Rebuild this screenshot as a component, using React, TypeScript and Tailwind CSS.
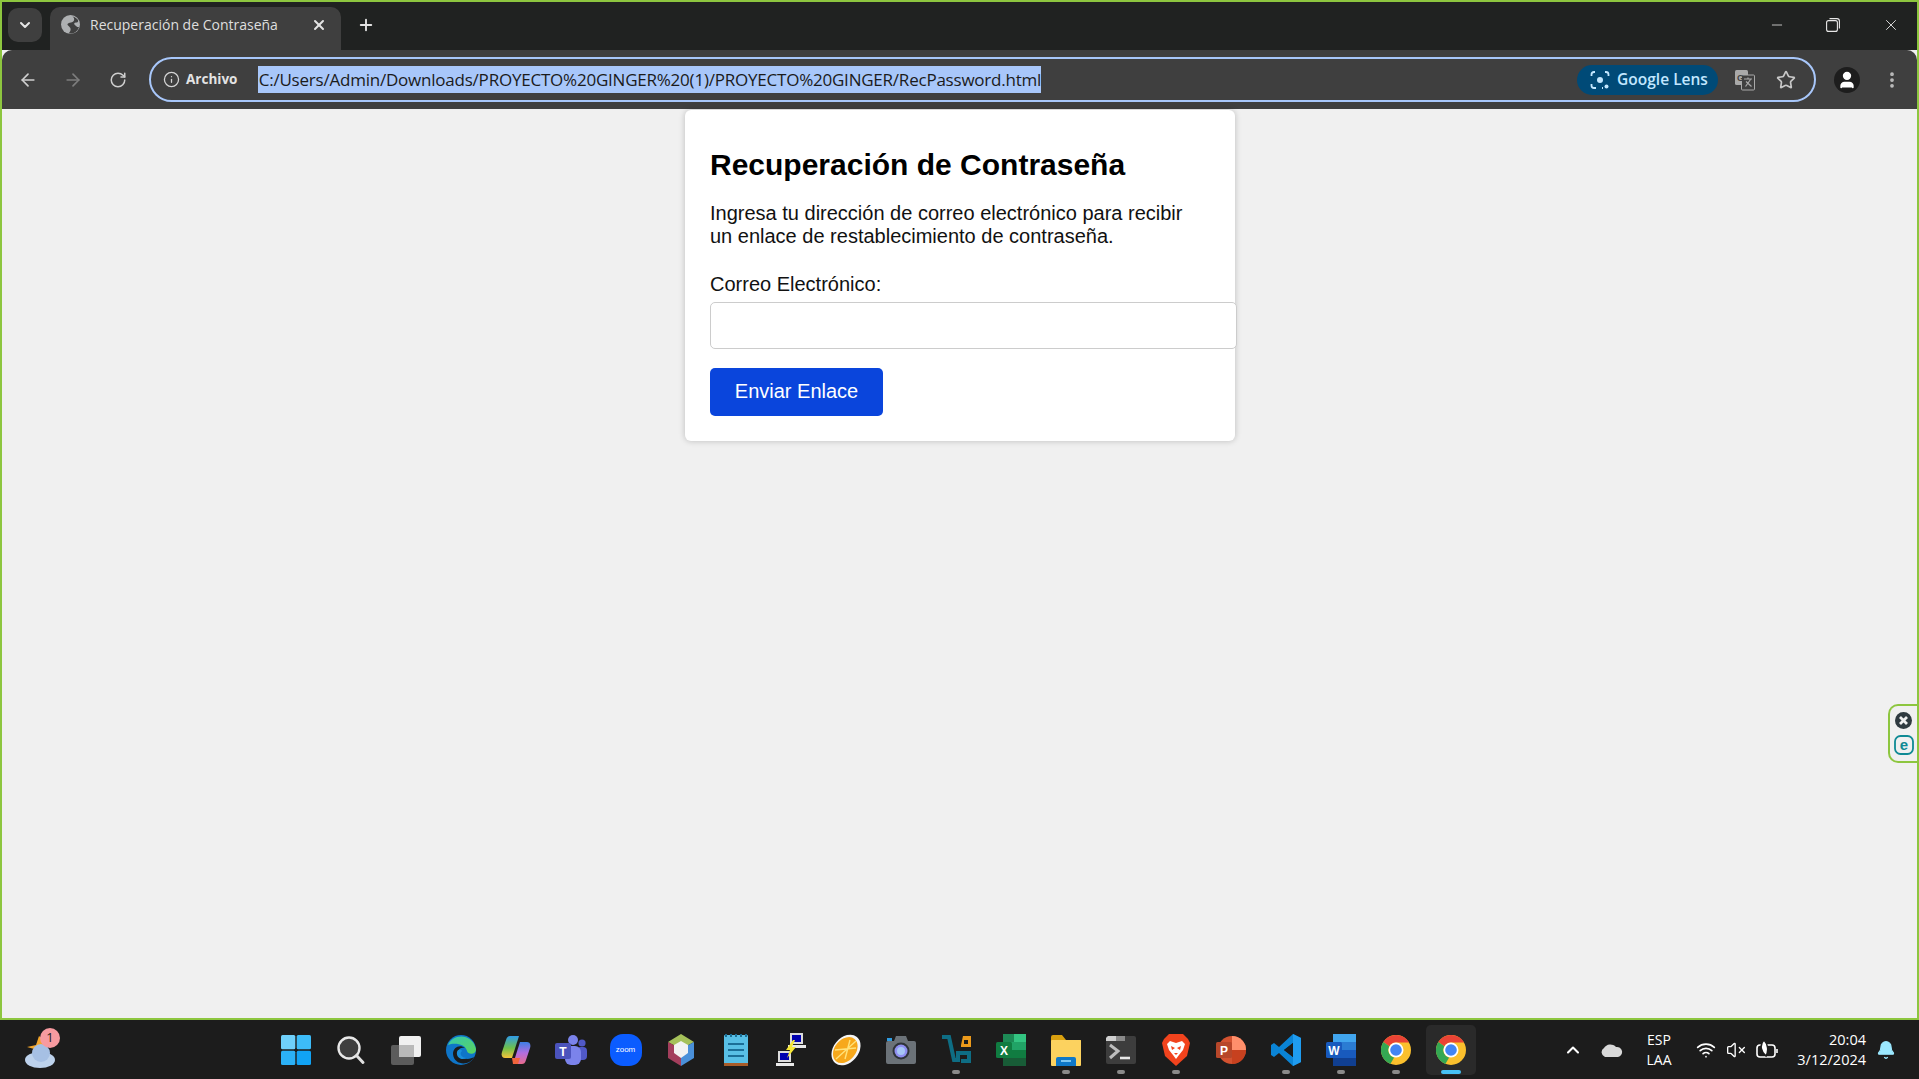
import React from 'react';
import { ArrowLeft, ArrowRight, RotateCw, Info, X, Plus, ChevronDown, ChevronUp, Star, EllipsisVertical, Minus, User, VolumeX, Wifi, Bell } from 'lucide-react';

const WindowsLogo = () => (
  <svg width="30" height="30" viewBox="0 0 30 30">
    <rect x="0" y="0" width="14.3" height="14.3" rx="1.5" fill="#6fd0fb" />
    <rect x="15.7" y="0" width="14.3" height="14.3" rx="1.5" fill="#3dbcf8" />
    <rect x="0" y="15.7" width="14.3" height="14.3" rx="1.5" fill="#2bb1f7" />
    <rect x="15.7" y="15.7" width="14.3" height="14.3" rx="1.5" fill="#11a3f5" />
  </svg>
);

const SearchIcon = () => (
  <svg width="30" height="30" viewBox="0 0 30 30" fill="none">
    <circle cx="13" cy="13" r="10.5" fill="#3e3e3e" stroke="#e8e8e8" strokeWidth="2.4" />
    <path d="M20.5 20.5 L27 27.5" stroke="#e0e0e0" strokeWidth="3" strokeLinecap="round" />
  </svg>
);

const TaskView = () => (
  <svg width="30" height="30" viewBox="0 0 30 30">
    <rect x="0" y="10" width="23" height="20" rx="2" fill="#5c5c5c" />
    <rect x="8" y="1" width="22" height="21" rx="2" fill="#f0f0f0" />
    <rect x="8" y="10" width="15" height="12" fill="#b9b9b9" />
  </svg>
);

const EdgeIcon = () => (
  <svg width="30" height="32" viewBox="0 0 30 32">
    <defs>
      <linearGradient id="edgeA" x1="0" y1="0" x2="1" y2="1">
        <stop offset="0" stopColor="#36c7b0" />
        <stop offset="1" stopColor="#5bd35c" />
      </linearGradient>
    </defs>
    <circle cx="15" cy="16" r="15" fill="#0f75c8" />
    <path d="M2 11 C6 0 26 -2 30 15 C30 21 22 21 21 17 C20 10 8 8 2 11 Z" fill="url(#edgeA)" />
    <path d="M19 14 C12 12 10 20 15 23 C20 26 25 25 28 23 C24 32 8 32 7 20 C7 13 14 10 19 14 Z" fill="#1b1b1b" />
    <path d="M16 17 C13 19 15 24 21 24 C15 27 10 23 11 18 C12 15 15 15 16 17 Z" fill="#1a8fdc" />
  </svg>
);

const CopilotIcon = () => (
  <svg width="30" height="32" viewBox="0 0 30 32">
    <defs>
      <linearGradient id="copA" x1="0" y1="0" x2="0" y2="1">
        <stop offset="0" stopColor="#2f9be8" />
        <stop offset="0.55" stopColor="#6fc04a" />
        <stop offset="1" stopColor="#f6c23a" />
      </linearGradient>
      <linearGradient id="copB" x1="0" y1="0" x2="0" y2="1">
        <stop offset="0" stopColor="#3c7fe6" />
        <stop offset="0.5" stopColor="#b26de0" />
        <stop offset="1" stopColor="#e86a8c" />
      </linearGradient>
    </defs>
    <path d="M9 2 H18 L11 24 H4 C1 24 0 21 1 18 L5 6 C6 3 7 2 9 2 Z" fill="url(#copA)" />
    <path d="M21 30 H12 L19 8 H26 C29 8 30 11 29 14 L25 26 C24 29 23 30 21 30 Z" fill="url(#copB)" />
    <path d="M11 24 H19 L17 30 H12 Z" fill="#f0643c" />
  </svg>
);

const TeamsIcon = () => (
  <svg width="32" height="32" viewBox="0 0 32 32">
    <circle cx="18" cy="6" r="5" fill="#7b83eb" />
    <circle cx="27" cy="9" r="3.6" fill="#5059c9" />
    <rect x="22" y="13" width="10" height="13" rx="4" fill="#5059c9" />
    <rect x="10" y="12" width="16" height="19" rx="6" fill="#7b83eb" />
    <rect x="0" y="9" width="16" height="16" rx="2" fill="#4b53bc" />
    <text x="8" y="21.5" textAnchor="middle" fill="#fff" fontSize="12" fontWeight="700" fontFamily="Liberation Sans, sans-serif">T</text>
  </svg>
);

const ZoomIcon = () => (
  <div className="flex h-[32px] w-[32px] items-center justify-center rounded-[13px] bg-[#0b5cff]">
    <span className="font-['Liberation_Sans',sans-serif] text-[8px] text-white">zoom</span>
  </div>
);

const CubeIcon = () => (
  <svg width="28" height="32" viewBox="0 0 28 32">
    <polygon points="14,0 27,8 14,15 1,8" fill="#a5c15a" />
    <polygon points="1,8 14,15 14,32 1,24" fill="#a33e5c" />
    <polygon points="27,8 14,15 14,32 27,24" fill="#4a90d9" />
    <polygon points="14,7 21,11 21,19 14,24 7,19 7,11" fill="#f2f2f2" />
  </svg>
);

const NotepadIcon = () => (
  <svg width="24" height="32" viewBox="0 0 24 32">
    <rect x="0" y="1" width="24" height="30" rx="1" fill="#58bfe6" />
    <rect x="0" y="29" width="24" height="3" fill="#a85c2a" />
    <path d="M2 0 V3 M7 0 V3 M12 0 V3 M17 0 V3 M22 0 V3" stroke="#1a6f96" strokeWidth="2" />
    <path d="M4 10 H20 M4 16 H20 M4 22 H20" stroke="#1b6e98" strokeWidth="2.2" />
  </svg>
);

const PuttyIcon = () => (
  <svg width="30" height="34" viewBox="0 0 30 34">
    <rect x="14" y="0" width="13" height="11" fill="#dcdcdc" />
    <rect x="16" y="2" width="9" height="7" fill="#0000b0" />
    <rect x="12" y="12" width="18" height="3" fill="#e8e8e8" />
    <rect x="2" y="18" width="13" height="11" fill="#dcdcdc" />
    <rect x="4" y="20" width="9" height="7" fill="#0000b0" />
    <rect x="0" y="30" width="18" height="3" fill="#e8e8e8" />
    <polygon points="17,7 10,17 14,17 11,25 20,14 16,14 19,7" fill="#f5e636" />
  </svg>
);

const OrangeIcon = () => (
  <svg width="32" height="32" viewBox="0 0 32 32">
    <ellipse cx="16" cy="16" rx="12.5" ry="17" transform="rotate(40 16 16)" fill="#f5f5f5" />
    <ellipse cx="15.5" cy="16.5" rx="10.5" ry="14.5" transform="rotate(40 16 16)" fill="#f7a81b" />
    <path d="M6 25 L26 7 M15 25 L20 6 M5 16 L26 14" stroke="#ffe27a" strokeWidth="1.4" />
  </svg>
);

const CameraIcon = () => (
  <svg width="30" height="30" viewBox="0 0 30 30">
    <path d="M0 8 Q0 6 2 6 H8 L10 1 H20 L22 6 H28 Q30 6 30 8 V27 Q30 29 28 29 H2 Q0 29 0 27 Z" fill="#6b7278" />
    <rect x="1" y="3" width="5" height="3" fill="#2e9be0" />
    <circle cx="15" cy="16" r="8.5" fill="#2e3338" />
    <circle cx="15" cy="16" r="6.5" fill="#8f8ff0" />
    <circle cx="15" cy="16" r="4" fill="#a6c6f5" />
  </svg>
);

const VsIcon = () => (
  <svg width="30" height="32" viewBox="0 0 30 32" fill="none">
    <path d="M1 3 H8 L13 26 H17 V19 H28 V27 H20" stroke="#0e6d84" strokeWidth="4" />
    <path d="M20 11 L22 2 H30 V13 H20 Z" fill="#ec9a1b" />
    <rect x="23" y="6" width="4" height="4" fill="#1c1c1c" />
  </svg>
);

const ExcelIcon = () => (
  <svg width="30" height="32" viewBox="0 0 30 32">
    <rect x="7" y="0" width="23" height="32" rx="1.5" fill="#21a366" />
    <rect x="7" y="0" width="11" height="8" fill="#1d8a56" />
    <rect x="18" y="0" width="12" height="8" fill="#33c481" />
    <rect x="18" y="16" width="12" height="8" fill="#107c41" />
    <rect x="7" y="16" width="11" height="8" fill="#107c41" />
    <rect x="7" y="24" width="23" height="8" fill="#185c37" />
    <rect x="0" y="8" width="16" height="16" rx="1.5" fill="#107c41" />
    <text x="8" y="20.5" textAnchor="middle" fill="#fff" fontSize="12" fontWeight="700" fontFamily="Liberation Sans, sans-serif">X</text>
  </svg>
);

const FolderIcon = () => (
  <svg width="30" height="32" viewBox="0 0 30 32">
    <path d="M0 3 Q0 1 2 1 H11 L15 6 H30 V12 H0 Z" fill="#d9a00f" />
    <rect x="0" y="6" width="30" height="26" rx="1" fill="#fcd25f" />
    <path d="M5 32 V25 Q5 23 7 23 H23 Q25 23 25 25 V32 Z" fill="#0f78c8" />
    <rect x="10" y="26" width="10" height="2" fill="#7cc6f2" />
  </svg>
);

const TerminalIcon = () => (
  <svg width="30" height="28" viewBox="0 0 30 28" fill="none">
    <rect x="0" y="0" width="30" height="28" rx="2" fill="#3d3d3d" />
    <path d="M2 0 H10 V5 H0 V2 Z" fill="#cfcfcf" />
    <rect x="10" y="0" width="9" height="5" fill="#8a8a8a" />
    <path d="M4 9 L12 15 L4 22" stroke="#bdbdbd" strokeWidth="3" />
    <path d="M14 22 H24" stroke="#e8e8e8" strokeWidth="2.6" />
  </svg>
);

const BraveIcon = () => (
  <svg width="28" height="34" viewBox="0 0 28 34">
    <path d="M7 1 H21 L26 6 L28 10 L25 23 L14 33 L3 23 L0 10 L2 6 Z" fill="#f1431d" />
    <path d="M8 8 L14 10 L20 8 L23 11 L21 17 L17 22 L14 26 L11 22 L7 17 L5 11 Z" fill="#fff" />
    <path d="M9 13 L13 15 L10 17 Z M19 13 L15 15 L18 17 Z M12 20 H16 L14 22 Z" fill="#f1431d" />
  </svg>
);

const PowerPointIcon = () => (
  <svg width="30" height="32" viewBox="0 0 30 32">
    <circle cx="16" cy="16" r="14" fill="#d35230" />
    <path d="M16 2 A14 14 0 0 1 30 16 H16 Z" fill="#ff8f6b" />
    <path d="M16 16 H30 A14 14 0 0 1 16 30 Z" fill="#c43e1c" opacity="0.85" />
    <rect x="0" y="8" width="16" height="16" rx="1.5" fill="#b7472a" />
    <text x="8" y="20.5" textAnchor="middle" fill="#fff" fontSize="12" fontWeight="700" fontFamily="Liberation Sans, sans-serif">P</text>
  </svg>
);

const VsCodeIcon = () => (
  <svg width="30" height="32" viewBox="0 0 30 32">
    <path d="M22 0 L30 4 V28 L22 32 L8 19 L3 23 L0 21 V11 L3 9 L8 13 Z M22 9 L13 16 L22 23 Z" fill="#0a84d6" />
    <path d="M22 0 L30 4 V28 L22 32 Z M22 9 L22 23 L22 32 Z" fill="#1f9cf0" />
    <path d="M22 9 L13 16 L22 23 Z" fill="#1c1c1c" />
  </svg>
);

const WordIcon = () => (
  <svg width="30" height="32" viewBox="0 0 30 32">
    <rect x="7" y="0" width="23" height="32" rx="1.5" fill="#2b7cd3" />
    <rect x="7" y="0" width="23" height="8" fill="#41a5ee" />
    <rect x="7" y="16" width="23" height="8" fill="#185abd" />
    <rect x="7" y="24" width="23" height="8" fill="#103f91" />
    <rect x="0" y="8" width="16" height="16" rx="1.5" fill="#185abd" />
    <text x="8" y="20.5" textAnchor="middle" fill="#fff" fontSize="12" fontWeight="700" fontFamily="Liberation Sans, sans-serif">W</text>
  </svg>
);

const ChromeIcon = () => (
  <svg width="30" height="32" viewBox="0 0 32 32">
    <circle cx="16" cy="16" r="16" fill="#fbc02d" />
    <path d="M16 0 A16 16 0 0 1 30 8 H16 A8 8 0 0 0 9 12 L2.5 7.5 A16 16 0 0 1 16 0 Z" fill="#ea4335" />
    <path d="M2.5 7.5 L9 12 A8 8 0 0 0 14 24 L10 31 A16 16 0 0 1 2.5 7.5 Z" fill="#34a853" />
    <circle cx="16" cy="16" r="8" fill="#fff" />
    <circle cx="16" cy="16" r="6.2" fill="#4285f4" />
  </svg>
);

const WeatherIcon = () => (
  <div className="relative h-[36px] w-[32px]">
    <svg width="32" height="36" viewBox="0 0 32 36" className="absolute left-0 top-0">
      <path d="M2 15 L11 13 L14 4 L21 10 L20 20 Z" fill="#f4a62a" />
      <ellipse cx="15" cy="28" rx="15" ry="8" fill="#bdd2ec" />
      <circle cx="16" cy="21" r="9" fill="#a6c0e4" />
    </svg>
    <div className="absolute left-[15px] top-[-4px] flex h-[20px] w-[20px] items-center justify-center rounded-full bg-[#f79aa0] font-['Open_Sans',sans-serif] text-[13px] text-[#222]">
      1
    </div>
  </div>
);

// Solid grey globe used by Chrome for local files
const TabGlobe = () => (
  <svg width="19" height="19" viewBox="0 0 19 19" className="shrink-0">
    <circle cx="9.5" cy="9.5" r="9.5" fill="#aeb0b2" />
    <path d="M11.5 1.5 C14 3 13.5 6 11.5 7 C9.5 8 7.5 7.5 6.5 9 C6 10.5 9 11.5 9.5 13.5 C10 15 9 17 8 18 C6 17.5 9 19 11 18.5 C14 18 17 15.5 18 12 C16 12.5 15 11 14 10 C12.5 9 13 7.5 15 7.5 C16.5 7.5 17.5 7 17 5 C16 3.5 14 2 11.5 1.5 Z" fill="#3f3f3f" />
  </svg>
);

const taskbarIcons: { key: string; icon: React.ReactNode; dot?: boolean; active?: boolean }[] = [
  { key: 'win', icon: <WindowsLogo /> },
  { key: 'search', icon: <SearchIcon /> },
  { key: 'task', icon: <TaskView /> },
  { key: 'edge', icon: <EdgeIcon /> },
  { key: 'copilot', icon: <CopilotIcon /> },
  { key: 'teams', icon: <TeamsIcon /> },
  { key: 'zoom', icon: <ZoomIcon /> },
  { key: 'cube', icon: <CubeIcon /> },
  { key: 'notepad', icon: <NotepadIcon /> },
  { key: 'putty', icon: <PuttyIcon /> },
  { key: 'orange', icon: <OrangeIcon /> },
  { key: 'camera', icon: <CameraIcon /> },
  { key: 'vs', icon: <VsIcon />, dot: true },
  { key: 'excel', icon: <ExcelIcon /> },
  { key: 'folder', icon: <FolderIcon />, dot: true },
  { key: 'terminal', icon: <TerminalIcon />, dot: true },
  { key: 'brave', icon: <BraveIcon />, dot: true },
  { key: 'ppt', icon: <PowerPointIcon /> },
  { key: 'code', icon: <VsCodeIcon />, dot: true },
  { key: 'word', icon: <WordIcon />, dot: true },
  { key: 'chrome', icon: <ChromeIcon />, dot: true },
  { key: 'chrome2', icon: <ChromeIcon />, active: true },
];

const TabStrip = () => (
  <div className="flex h-[48px] items-end bg-[#202221] pl-[6px]">
    <div className="mb-[8px] flex h-[34px] w-[34px] items-center justify-center rounded-[10px] bg-[#3f3f3f] text-[#e6e6e6]">
      <ChevronDown size={16} strokeWidth={3} />
    </div>
    <div className="ml-[8px] flex h-[43px] w-[291px] items-center rounded-t-[10px] bg-[#3f3f3f] pb-[8px] pl-[11px] pr-[14px]">
      <TabGlobe />
      <span className="ml-[10px] flex-1 font-['Open_Sans',sans-serif] text-[14px] text-[#dedede]">Recuperación de Contraseña</span>
      <X size={16} strokeWidth={3} className="text-[#e3e3e3]" />
    </div>
    <div className="mb-[16px] ml-[16px] text-[#e3e3e3]">
      <Plus size={18} strokeWidth={2.5} />
    </div>
    <div className="flex-1" />
    <div className="mb-[16px] flex items-center text-[#e8e8e8]">
      <div className="flex w-[56px] justify-center"><Minus size={16} strokeWidth={1.2} /></div>
      <div className="flex w-[56px] justify-center">
        <svg width="14" height="14" viewBox="0 0 14 14" fill="none" stroke="currentColor" strokeWidth="1.1">
          <rect x="0.6" y="2.6" width="10.8" height="10.8" rx="2" />
          <path d="M3.5 0.6 H11 Q13.4 0.6 13.4 3 V10.5" />
        </svg>
      </div>
      <div className="ml-[4px] flex w-[52px] justify-center"><X size={18} strokeWidth={1.2} /></div>
    </div>
  </div>
);

const Toolbar = () => (
  <div className="flex h-[59px] items-center rounded-t-[10px] bg-[#3f3f3f] pl-[10px]">
    <ArrowLeft size={20} className="ml-[6px] text-[#cfcfcf]" strokeWidth={2} />
    <ArrowRight size={20} className="ml-[25px] text-[#7d7d7d]" strokeWidth={2} />
    <RotateCw size={18} className="ml-[26px] text-[#cfcfcf]" strokeWidth={2} />
    <div className="ml-[22px] flex h-[45px] w-[1667px] shrink-0 items-center rounded-full border-2 border-[#a8c7fa] pl-[12px] pr-[18px]">
      <Info size={17} className="text-[#d5d5d5]" strokeWidth={1.8} />
      <span className="ml-[6px] font-['Open_Sans',sans-serif] text-[13.5px] font-bold text-[#e3e3e3]">Archivo</span>
      <span className="ml-[21px] flex h-[27px] w-[783px] items-center justify-center whitespace-nowrap bg-[#a8c7fa] font-['Open_Sans',sans-serif] text-[17px] tracking-[-0.22px] text-[#1b1b1b]">
        C:/Users/Admin/Downloads/PROYECTO%20GINGER%20(1)/PROYECTO%20GINGER/RecPassword.html
      </span>
      <div className="flex-1" />
      <div className="flex h-[30px] w-[141px] items-center justify-center gap-[7px] rounded-full bg-[#004a77] pl-[3px] text-[#c2e7ff]">
        <svg width="20" height="20" viewBox="0 0 20 20" fill="none" stroke="currentColor" strokeWidth="1.8">
          <path d="M1.5 6 V4.5 Q1.5 2 4 2 H5 M15 2 H16 Q18.5 2 18.5 4.5 V6 M1.5 14 V15.5 Q1.5 18 4 18 H6 M12 18 H13" />
          <circle cx="10" cy="10" r="3" fill="currentColor" stroke="none" />
          <circle cx="16.5" cy="16.5" r="2" fill="currentColor" stroke="none" />
        </svg>
        <span className="font-['Open_Sans',sans-serif] text-[15.5px] font-semibold">Google Lens</span>
      </div>
      <div className="ml-[16px] flex w-[22px] justify-center">
        <svg width="22" height="22" viewBox="0 0 22 22">
          <rect x="1" y="1" width="13" height="15" rx="1.5" fill="#a9a9a9" />
          <rect x="7.5" y="6" width="13" height="15" rx="1" fill="#3f3f3f" stroke="#a9a9a9" />
          <text x="6.5" y="12" textAnchor="middle" fontSize="9" fontWeight="700" fill="#3f3f3f" fontFamily="Liberation Sans, sans-serif">G</text>
          <path d="M10 10 H18 M14 8.5 V10 M11.5 17.5 L16.5 10.5 M12 12.5 L17.5 17.5" stroke="#a9a9a9" strokeWidth="1.2" fill="none" />
        </svg>
      </div>
      <Star size={20} strokeWidth={2} className="ml-[20px] text-[#c8c8c8]" />
    </div>
    <div className="ml-[18px] flex h-[26px] w-[26px] shrink-0 items-center justify-center rounded-full bg-[#1d1d1d]">
      <User size={20} fill="#fff" className="text-white" strokeWidth={2} />
    </div>
    <EllipsisVertical size={20} strokeWidth={2.5} className="ml-[22px] shrink-0 text-[#bdbdbd]" />
  </div>
);

const RecoveryCard = () => (
  <div className="ml-[683px] mt-px h-[331px] w-[550px] rounded-[6px] bg-white px-[25px] pb-[25px] pt-[38px] font-['Liberation_Sans',sans-serif] shadow-[0_0_6px_rgba(0,0,0,0.22)]">
    <h1 className="text-[30px] font-bold leading-[34px] text-black">Recuperación de Contraseña</h1>
    <p className="mt-[20px] text-[20px] leading-[23px] text-[#111]">
      Ingresa tu dirección de correo electrónico para recibir un enlace de restablecimiento de contraseña.
    </p>
    <label className="mt-[25px] block text-[20px] leading-[23px] text-[#111]">Correo Electrónico:</label>
    <input type="text" className="mt-[6px] block h-[47px] w-[527px] rounded-[5px] border border-[#cccccc] bg-white" />
    <button className="mt-[19px] block h-[48px] w-[173px] rounded-[5px] bg-[#0a45dc] pb-[3px] text-[20px] text-white">Enviar Enlace</button>
  </div>
);

const SideWidget = () => (
  <div className="absolute right-0 top-[702px] flex h-[59px] w-[29px] flex-col items-center justify-center gap-[6px] rounded-l-[10px] border-2 border-r-0 border-[#8dc63f] bg-[#f0f0f0]">
    <svg width="17" height="17" viewBox="0 0 17 17">
      <circle cx="8.5" cy="8.5" r="8.5" fill="#2f3a40" />
      <path d="M5 5 L12 12 M12 5 L5 12" stroke="#f0f0f0" strokeWidth="2.8" />
    </svg>
    <svg width="20" height="20" viewBox="0 0 20 20" fill="none">
      <rect x="1" y="1" width="18" height="18" rx="5.5" stroke="#0f8a94" strokeWidth="1.8" />
      <text x="10" y="15" textAnchor="middle" fontSize="15" fontWeight="700" fill="#0f8a94" fontFamily="Liberation Sans, sans-serif">e</text>
    </svg>
  </div>
);

const Taskbar = () => (
  <div className="flex h-[59px] items-center bg-[#1c1c1c] pt-px text-white">
    <div className="w-[268px] pl-[25px]"><WeatherIcon /></div>
    <div className="flex">
      {taskbarIcons.map((item) => (
        <div
          key={item.key}
          className={
            item.active
              ? 'relative mx-[3px] flex h-[50px] w-[50px] items-center justify-center rounded-[5px] bg-[#2a2a2a]'
              : 'relative flex h-[50px] w-[55px] items-center justify-center'
          }
        >
          {item.icon}
          {item.dot && <div className="absolute bottom-[1px] left-1/2 h-[4px] w-[8px] -translate-x-1/2 rounded-full bg-[#8a8a8a]" />}
          {item.active && <div className="absolute bottom-[1px] left-1/2 h-[4px] w-[20px] -translate-x-1/2 rounded-full bg-[#47c1f5]" />}
        </div>
      ))}
    </div>
    <div className="flex-1" />
    <div className="flex items-center pr-[23px] font-['Open_Sans',sans-serif] text-[14px] text-white">
      <ChevronUp size={20} strokeWidth={2.5} />
      <svg width="24" height="16" viewBox="0 0 24 16" className="ml-[16px]">
        <path d="M6 15 A5 5 0 0 1 5 6 A7 6 0 0 1 17 5 A5 5 0 0 1 19 15 Z" fill="#d8d8d8" />
      </svg>
      <div className="ml-[21px] flex w-[30px] flex-col items-center leading-[20px]">
        <span>ESP</span>
        <span>LAA</span>
      </div>
      <Wifi size={20} className="ml-[22px]" strokeWidth={2} />
      <VolumeX size={20} className="ml-[10px]" strokeWidth={1.6} />
      <svg width="24" height="22" viewBox="0 0 24 22" fill="none" stroke="#fff" strokeWidth="1.6" className="ml-[9px]">
        <rect x="2" y="6" width="18" height="12" rx="3" />
        <path d="M22 10 V14" />
        <path d="M9 1 C4 6 6 13 11 17 C14 12 13 5 9 1 Z" fill="#fff" stroke="#1c1c1c" />
      </svg>
      <div className="ml-[11px] flex w-[76px] flex-col items-end text-[14.5px] leading-[20px]">
        <span>20:04</span>
        <span>3/12/2024</span>
      </div>
      <Bell size={20} fill="#9be8ff" className="ml-[10px] text-[#9be8ff]" strokeWidth={1.5} />
    </div>
  </div>
);

export default function App() {
  return (
    <div className="flex h-[1079px] w-full flex-col overflow-hidden">
      <div className="relative flex flex-1 flex-col overflow-hidden border-x-2 border-t-2 border-[#8dc63f] bg-[#f0f0f0]">
        <TabStrip />
        <Toolbar />
        <div className="flex-1 bg-[#f0f0f0]">
          <RecoveryCard />
        </div>
        <SideWidget />
      </div>
      <div className="h-[2px] bg-[#8dc63f]" />
      <Taskbar />
    </div>
  );
}
